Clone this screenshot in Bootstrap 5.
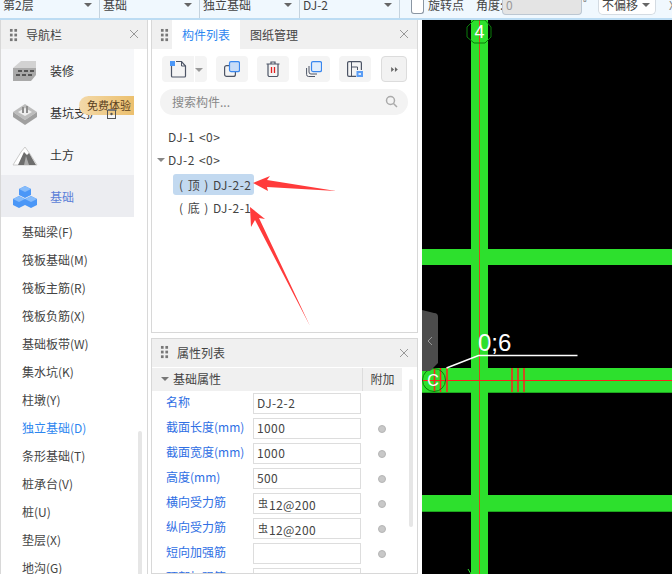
<!DOCTYPE html>
<html lang="zh">
<head>
<meta charset="utf-8">
<title>构件列表</title>
<link href="https://cdn.jsdelivr.net/npm/bootstrap@5.3.0/dist/css/bootstrap.min.css" rel="stylesheet">
<style>
html,body{width:672px;height:574px;overflow:hidden;margin:0}
body{font:12px/1.2 "Noto Sans CJK SC","Liberation Sans",sans-serif;color:#333;background:#fff}
.topbar{height:20px;background:#f0f8fe;border-bottom:2px solid #bcdcf3;overflow:hidden;font-size:12px;color:#444}
.topbar>*{flex:none}
.tcell{width:100px;height:18px;border-right:1px solid #c5d3de;padding-left:3px;position:relative;line-height:10px}
.caret-d{width:0;height:0;border:4px solid transparent;border-top:4px solid #666;border-bottom:0}
.tcell .caret-d{position:absolute;right:7px;top:3px}
.tcheck{width:13px;height:14px;border:1px solid #8a96a3;border-top:0;border-radius:0 0 3px 3px;background:#fff;margin:0 4px 0 11px}
.tlabel{line-height:10px;height:18px;width:48px;white-space:nowrap}
.tlabel.tshort{width:26px}
.tangle{width:80px;height:15px;background:#e4e4e4;border:1px solid #bcc7d2;border-top:0;border-radius:0 0 4px 4px;color:#999;line-height:9px;padding-left:3px}
.tdeg{width:16px;font-size:10px;line-height:6px;color:#666;padding-left:1px}
.tselect{width:58px;height:15px;background:#fff;border:1px solid #d4dbe2;border-top:0;border-radius:0 0 5px 5px;line-height:9px;padding-left:3px;position:relative}
.tselect .caret-d{position:absolute;right:5px;top:3px}
.tclose{color:#888;line-height:10px;margin-left:13px}
.mainrow{height:554px}
.mainrow>*{flex:none}
.leftpanel{width:148px;border-left:1px solid #d8d8d8;border-right:1px solid #d8d8d8;position:relative;overflow:hidden}
.gapa{width:3px}
.gapb{width:4px}
.midcol{width:267px}
.phead{height:29px;background:#f0f0f0;position:relative;flex:none}
.grip{width:9px;height:14px;flex:none;margin-left:8px;background-image:radial-gradient(circle,#777 1.3px,transparent 1.5px);background-size:4.5px 4.7px}
.ptitle{margin-left:8px;font-size:12px;color:#444;padding-top:2px}
.xclose{position:absolute;right:8px;top:9px}
.navitem{width:133px;height:42px;background:#f6f7f9;padding-left:11px;padding-top:2px;gap:12px;font-size:12px;color:#333;flex:none;position:relative}
.navitem.current{background:#ecedf1;color:#5b7fd8}
.navicon{width:26px;height:26px;flex:none}
.promo{position:absolute;left:78px;top:5px;width:55px;height:19px;border-radius:10px 0 0 10px;background:linear-gradient(90deg,#f3d9a9,#ecc06e);color:#5a4020;font-size:11px;line-height:18px;padding-left:8px;white-space:nowrap;overflow:hidden}
.locki{position:absolute;left:106px;top:18px}
.sublist{list-style:none;margin:0;padding:1px 0 0 21px}
.sublist li{height:28px;line-height:28px;font-size:12px;color:#444;white-space:nowrap}
.sublist li.picked{color:#2c86f0}
.navscroll{position:absolute;left:137px;top:411px;width:4px;height:150px;background:#e6e6e6;border-radius:2px}
.toppanel{height:313px;border:1px solid #d8d8d8;border-top:0;position:relative;flex:none}
.botpanel{margin-top:5px;flex:1;border:1px solid #d8d8d8;position:relative;overflow:hidden;min-height:0}
.tabon{width:68px;height:29px;background:#fff;color:#2c86f0;font-size:12px;line-height:29px;text-align:center;margin-left:3px}
.taboff{width:68px;height:29px;color:#444;font-size:12px;line-height:29px;text-align:center}
.toolrow{height:26px;margin:7px 0 0 10px;gap:9px}
.tbtn{width:32px;height:26px;padding:0;border:0;border-radius:4px;background:#f4f4f4;display:flex;align-items:center;justify-content:center}
.tsplit{width:45px;height:26px;background:#f4f4f4;border-radius:4px;position:relative}
.tsplit i{position:absolute;left:32px;top:0;bottom:0;width:1px;background:#fff}
.tsplit .caret-d{position:absolute;right:4px;top:12px;border-top-color:#999}
.tsplit svg{position:absolute;left:8px;top:4px}
.tbtn.tmore{width:26px;margin-left:1px;background:#f2f2f2;border:1px solid #dcdcdc}
.searchbox{margin:7px 0 0 8px;width:248px;height:26px;background:#f3f3f3;border-radius:13px;position:relative;padding-left:12px;line-height:26px;color:#888;font-size:12px}
.searchbox svg{position:absolute;right:10px;top:6px}
.treebox{margin-top:10px;padding-left:16px}
.trow{height:24px;line-height:24px;white-space:nowrap;position:relative;font-size:12px;color:#444;letter-spacing:.45px;word-spacing:1px}
.trow.tfirst{height:23px}
.trow .caret-d{position:absolute;left:-11px;top:10px;border-top-color:#888}
.tchild{margin-left:5px;padding-left:6px;width:81px;height:21px;line-height:21px;border-radius:3px;margin-top:2px;margin-bottom:2px}
.tchild.sel{background:#c2d9f0}
.overlayarrows{position:absolute;left:0;top:0;pointer-events:none}
.proptop{height:28px;background:#f0f0f0;flex:none;position:relative;padding-bottom:2px}
.groupline{height:23px;width:250px;background:#f0f0f0;margin-top:1px;position:relative;color:#444;font-size:12px;line-height:21px;padding-left:21px;flex:none}
.groupline .caret-d{position:absolute;left:9px;top:9px;border-top-color:#777}
.attach{position:absolute;right:0;top:0;height:23px;width:40px;border-left:1px solid #ddd;text-align:center}
.proprow{height:25px;width:252px;padding-left:14px;flex:none}
.plabel{width:87px;color:#2f6fe4;font-size:12px;white-space:nowrap;flex:none;padding-bottom:2px}
.pvalue{width:108px;height:21px;border:1px solid #ddd;border-radius:0;padding:0 3px;font-size:12px;line-height:18px;color:#444;background:#fff;flex:none;box-shadow:none;min-height:0;letter-spacing:.4px;white-space:nowrap}
.pdot{width:8px;height:8px;border-radius:50%;background:#c8c8c8;border:1px solid #b5b5b5;margin-left:17px;flex:none}
.rebar{font-size:10px;vertical-align:3px;margin-left:1px;margin-right:1px;letter-spacing:0}
.propscroll{position:absolute;left:257px;top:40px;width:4px;height:148px;background:#e6e6e6;border-radius:2px}
.canvasarea{width:250px;height:554px;background:#000;position:relative;overflow:hidden}
.canvasarea svg{display:block}
</style>
</head>
<body>
<div class="topbar d-flex align-items-start">
  <div class="tcell">第2层<span class="caret-d"></span></div>
  <div class="tcell">基础<span class="caret-d"></span></div>
  <div class="tcell">独立基础<span class="caret-d"></span></div>
  <div class="tcell">DJ-2<span class="caret-d"></span></div>
  <span class="tcheck"></span>
  <span class="tlabel">旋转点</span>
  <span class="tlabel tshort">角度:</span>
  <span class="tangle">0</span>
  <span class="tdeg">°</span>
  <span class="tselect">不偏移<span class="caret-d"></span></span>
  <span class="tclose">X</span>
</div>

<div class="mainrow d-flex">
  <aside class="leftpanel d-flex flex-column">
    <div class="phead d-flex align-items-center">
      <span class="grip"></span><span class="ptitle">导航栏</span>
      <svg class="xclose" width="10" height="10" viewBox="0 0 10 10"><path d="M1 1l8 8M9 1l-8 8" stroke="#999" fill="none"/></svg>
    </div>
    <div class="navitem d-flex align-items-center">
      <svg class="navicon" viewBox="0 0 26 26"><path d="M1 10l8-7h15v14z" fill="#d2d2d2"/><path d="M1 10h23v7l-5 6H1z" fill="#a9a9a9"/><path d="M6 12h4v2H6zM12 12h4v2h-4zM18 12h4v2h-4zM4 16h4v2H4zM10 16h4v2h-4zM16 16h4v2h-4z" fill="#555"/></svg>
      <span>装修</span>
    </div>
    <div class="navitem d-flex align-items-center">
      <svg class="navicon" viewBox="0 0 26 26"><path d="M13 4l12 8-12 8L1 12z" fill="#bdbdbd"/><path d="M1 12v5l12 8v-5zM25 12v5l-12 8v-5z" fill="#a0a0a0"/><path d="M13 8l7 4-7 4-7-4z" fill="#eee"/><path d="M10 7v6h2V7zM14 6v7h2V6z" fill="#8d8d8d"/></svg>
      <span>基坑支护</span>
      <span class="promo">免费体验</span>
      <svg class="locki" width="10" height="10" viewBox="0 0 10 10"><rect x=".5" y="1.500" width="8" height="8" fill="none" stroke="#555"/><path d="M1 0h7v2H1z" fill="#777"/><circle cx="4.500" cy="5" r="1.200" fill="#555"/></svg>
    </div>
    <div class="navitem d-flex align-items-center">
      <svg class="navicon" viewBox="0 0 26 26"><path d="M1 23l8-13 4-5 5 7 7 11z" fill="#fff" stroke="#ccc"/><path d="M6 23l6-13 3 3 2-2 7 12z" fill="#6d6d6d"/><path d="M12 23l2-9 3 9z" fill="#aaa"/></svg>
      <span>土方</span>
    </div>
    <div class="navitem current d-flex align-items-center">
      <svg class="navicon" viewBox="0 0 26 26"><g fill="#4b97f7"><path d="M13 2l6 3v6l-6 3-6-3V5z"/><path d="M7 12l6 3v6l-6 3-6-3v-6z"/><path d="M19 12l6 3v6l-6 3-6-3v-6z"/></g><g fill="#86bcfb"><path d="M13 2l6 3-6 3-6-3zM7 12l6 3-6 3-6-3zM19 12l6 3-6 3-6-3z"/></g></svg>
      <span>基础</span>
    </div>
    <ul class="sublist">
      <li>基础梁(F)</li>
      <li>筏板基础(M)</li>
      <li>筏板主筋(R)</li>
      <li>筏板负筋(X)</li>
      <li>基础板带(W)</li>
      <li>集水坑(K)</li>
      <li>柱墩(Y)</li>
      <li class="picked">独立基础(D)</li>
      <li>条形基础(T)</li>
      <li>桩承台(V)</li>
      <li>桩(U)</li>
      <li>垫层(X)</li>
      <li>地沟(G)</li>
    </ul>
    <span class="navscroll"></span>
  </aside>
  <div class="gapa"></div>

  <div class="midcol d-flex flex-column">
    <section class="toppanel">
      <div class="phead d-flex align-items-center">
        <span class="grip"></span>
        <span class="tabon">构件列表</span>
        <span class="taboff">图纸管理</span>
        <svg class="xclose" width="10" height="10" viewBox="0 0 10 10"><path d="M1 1l8 8M9 1l-8 8" stroke="#999" fill="none"/></svg>
      </div>
      <div class="toolrow d-flex">
        <div class="tsplit">
          <svg width="17" height="18" viewBox="0 0 17 18"><path d="M1.500 5v11a1 1 0 0 0 1 1h12a1 1 0 0 0 1-1V6l-4-4.500H6" fill="none" stroke="#4d5566" stroke-width="1.200"/><path d="M0 1h5v5H0z" fill="#4b97f7"/><path d="M11.500 1.500V6h4" fill="none" stroke="#4d5566"/></svg>
          <i></i><span class="caret-d"></span>
        </div>
        <button type="button" class="tbtn btn" aria-label="复制"><svg width="16" height="16" viewBox="0 0 16 16"><rect x=".6" y="4.600" width="10.800" height="10.800" rx="2" fill="none" stroke="#4d5566" stroke-width="1.200"/><rect x="5.500" y=".6" width="10" height="10" rx="1.500" fill="#c8dcf7" stroke="#3a87ee" stroke-width="1.200"/></svg></button>
        <button type="button" class="tbtn btn" aria-label="删除"><svg width="14" height="16" viewBox="0 0 14 16"><path d="M.5 3h13M5 3V1h4v2M2 3v11a1.500 1.500 0 0 0 1.500 1.500h7A1.500 1.500 0 0 0 12 14V3" fill="none" stroke="#4d5566" stroke-width="1.200"/><path d="M5.500 6v6M8.500 6v6" stroke="#e02020" stroke-width="1.300"/></svg></button>
        <button type="button" class="tbtn btn" aria-label="层间复制"><svg width="16" height="16" viewBox="0 0 16 16"><path d="M.6 7v6.500a2 2 0 0 0 2 2H9" fill="none" stroke="#4d5566"/><path d="M3 5v6a2 2 0 0 0 2 2h6" fill="none" stroke="#4d5566"/><rect x="5.500" y=".6" width="10" height="10" rx="1.500" fill="#e2eefc" stroke="#3a87ee" stroke-width="1.200"/></svg></button>
        <button type="button" class="tbtn btn" aria-label="存档"><svg width="16" height="16" viewBox="0 0 16 16"><path d="M9 15.400H2a1.400 1.400 0 0 1-1.400-1.400V2A1.400 1.400 0 0 1 2 .6h11A1.400 1.400 0 0 1 14.400 2v7" fill="none" stroke="#4d5566" stroke-width="1.200"/><path d="M4.500 1v14M4.500 6h6v3" fill="none" stroke="#4d5566"/><rect x="9.500" y="10" width="6.500" height="6" fill="#5a9df5"/><rect x="11.500" y="12" width="2.500" height="2" fill="#dbe9fb"/></svg></button>
        <button type="button" class="tbtn tmore btn" aria-label="更多"><svg width="7" height="5" viewBox="0 0 8 6"><path d="M0 0l3.500 3L0 6zM4.500 0L8 3 4.500 6z" fill="#666"/></svg></button>
      </div>
      <div class="searchbox">搜索构件...
        <svg width="13" height="13" viewBox="0 0 13 13"><circle cx="5.500" cy="5.500" r="4" fill="none" stroke="#aaa" stroke-width="1.500"/><path d="M8.500 8.500L12 12" stroke="#aaa" stroke-width="1.500"/></svg>
      </div>
      <div class="treebox">
        <div class="trow tfirst">DJ-1 &lt;0&gt;</div>
        <div class="trow"><span class="caret-d"></span>DJ-2 &lt;0&gt;</div>
        <div class="trow tchild sel">( 顶 ) DJ-2-2</div>
        <div class="trow tchild">( 底 ) DJ-2-1</div>
      </div>
      <svg class="overlayarrows" width="265" height="312" viewBox="151 20 265 312"><path d="M252 183l17-7-3 4 69 11-69-4 1 4z" fill="#ff3b3b"/><path d="M249 207l15 12-6-1 51 108-55-106-4 7z" fill="#ff3b3b"/></svg>
    </section>

    <section class="botpanel d-flex flex-column">
      <div class="phead proptop d-flex align-items-center">
        <span class="grip"></span><span class="ptitle">属性列表</span>
        <svg class="xclose" width="10" height="10" viewBox="0 0 10 10"><path d="M1 1l8 8M9 1l-8 8" stroke="#999" fill="none"/></svg>
      </div>
      <div class="groupline"><span class="caret-d"></span>基础属性<span class="attach">附加</span></div>
      <div class="proprow d-flex align-items-center"><span class="plabel">名称</span><span class="pvalue form-control">DJ-2-2</span></div>
      <div class="proprow d-flex align-items-center"><span class="plabel">截面长度(mm)</span><span class="pvalue form-control">1000</span><span class="pdot"></span></div>
      <div class="proprow d-flex align-items-center"><span class="plabel">截面宽度(mm)</span><span class="pvalue form-control">1000</span><span class="pdot"></span></div>
      <div class="proprow d-flex align-items-center"><span class="plabel">高度(mm)</span><span class="pvalue form-control">500</span><span class="pdot"></span></div>
      <div class="proprow d-flex align-items-center"><span class="plabel">横向受力筋</span><span class="pvalue form-control"><span class="rebar">虫</span>12@200</span><span class="pdot"></span></div>
      <div class="proprow d-flex align-items-center"><span class="plabel">纵向受力筋</span><span class="pvalue form-control"><span class="rebar">虫</span>12@200</span><span class="pdot"></span></div>
      <div class="proprow d-flex align-items-center"><span class="plabel">短向加强筋</span><span class="pvalue form-control"></span><span class="pdot"></span></div>
      <div class="proprow d-flex align-items-center"><span class="plabel">顶部加强筋</span><span class="pvalue form-control"></span><span class="pdot"></span></div>
      <span class="propscroll"></span>
    </section>
  </div>
  <div class="gapb"></div>

  <div class="canvasarea">
    <svg width="250" height="554" viewBox="422 20 250 554">
      <g fill="#2de02d">
        <rect x="422" y="249" width="250" height="16"/>
        <rect x="422" y="368" width="250" height="24"/>
        <rect x="422" y="495" width="250" height="16"/>
        <rect x="471" y="20" width="17" height="554"/>
      </g>
      <path d="M479.500 20v554" stroke="#cf4a1c"/>
      <path d="M422 380.500h250" stroke="#ff1f1f"/>
      <path d="M434.500 368v24M440.500 368v24M447 368v24M512 368v24M518 368v24M524 368v24" stroke="#ff1f1f" stroke-width="1.500"/>
      <path d="M422 392.500h49M488 392.500h184M422 511.500h49M488 511.500h184" stroke="#1fa51f"/>
      <path d="M474 20h11l6 7v10l-6 6h-11l-7-6V27z" fill="none" stroke="#0b7d0b"/>
      <text x="479.500" y="38" text-anchor="middle" fill="#fff" font-family="'Liberation Sans',sans-serif" font-size="18">4</text>
      <circle cx="434" cy="380" r="11.500" fill="none" stroke="#0b7d0b"/>
      <text x="433" y="386" text-anchor="middle" fill="#fff" font-family="'Liberation Sans',sans-serif" font-size="16">C</text>
      <path d="M446.500 368l32-12.500h99" fill="none" stroke="#fff" stroke-width="1.500"/>
      <text x="478" y="351" fill="#fff" font-family="'Liberation Sans',sans-serif" font-size="24">0;6</text>
      <path d="M422 310l12 3a4 4 0 0 1 4 4v46l-8 8h-8z" fill="#4c4c4c"/>
      <path d="M432 337l-4 4 4 4" fill="none" stroke="#999"/>
      <path d="M468 569l3 5 3-5" fill="none" stroke="#2de02d"/>
    </svg>
  </div>
</div>
<script src="https://cdn.jsdelivr.net/npm/bootstrap@5.3.0/dist/js/bootstrap.bundle.min.js"></script>
</body>
</html>
